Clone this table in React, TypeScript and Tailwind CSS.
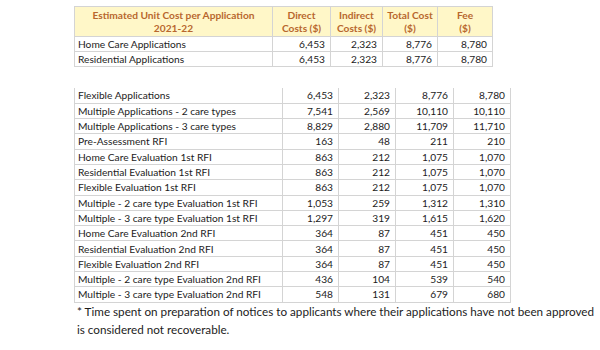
import React from "react";

const top = [
  ["Home Care Applications", "6,453", "2,323", "8,776", "8,780"],
  ["Residential Applications", "6,453", "2,323", "8,776", "8,780"],
];

const rows = [
  ["Flexible Applications", "6,453", "2,323", "8,776", "8,780"],
  ["Multiple Applications - 2 care types", "7,541", "2,569", "10,110", "10,110"],
  ["Multiple Applications - 3 care types", "8,829", "2,880", "11,709", "11,710"],
  ["Pre-Assessment RFI", "163", "48", "211", "210"],
  ["Home Care Evaluation 1st RFI", "863", "212", "1,075", "1,070"],
  ["Residential Evaluation 1st RFI", "863", "212", "1,075", "1,070"],
  ["Flexible Evaluation 1st RFI", "863", "212", "1,075", "1,070"],
  ["Multiple - 2 care type Evaluation 1st RFI", "1,053", "259", "1,312", "1,310"],
  ["Multiple - 3 care type Evaluation 1st RFI", "1,297", "319", "1,615", "1,620"],
  ["Home Care Evaluation 2nd RFI", "364", "87", "451", "450"],
  ["Residential Evaluation 2nd RFI", "364", "87", "451", "450"],
  ["Flexible Evaluation 2nd RFI", "364", "87", "451", "450"],
  ["Multiple - 2 care type Evaluation 2nd RFI", "436", "104", "539", "540"],
  ["Multiple - 3 care type Evaluation 2nd RFI", "548", "131", "679", "680"],
];

export default function App() {
  return (
    <div
      className="w-[600px] h-[350px] bg-white overflow-hidden pl-[74px] pt-[6px] text-[#1c1c1c]"
      style={{ fontFamily: "Lato, 'Open Sans', sans-serif" }}
    >
      <table className="border-collapse table-fixed text-[10.2px] leading-none">
        <colgroup>
          <col className="w-[198px]" />
          <col className="w-[58px]" />
          <col className="w-[52px]" />
          <col className="w-[55px]" />
          <col className="w-[55px]" />
        </colgroup>
        <thead>
          <tr className="h-[30px] bg-[#fff7c8] text-[#b8672e] font-bold">
            <th className="border border-[#d4d4d4] text-center leading-[13px]">
              Estimated Unit Cost per Application
              <br />
              2021-22
            </th>
            <th className="border border-[#d4d4d4] text-center leading-[13px]">
              Direct
              <br />
              Costs ($)
            </th>
            <th className="border border-[#d4d4d4] text-center leading-[13px]">
              Indirect
              <br />
              Costs ($)
            </th>
            <th className="border border-[#d4d4d4] text-center leading-[13px]">
              Total Cost
              <br />
              ($)
            </th>
            <th className="border border-[#d4d4d4] text-center leading-[13px]">
              Fee
              <br />
              ($)
            </th>
          </tr>
        </thead>
        <tbody>
          {top.map((r) => (
            <tr key={r[0]} className="h-[15px]">
              <td className="border border-[#d4d4d4] pl-[3px] text-left">{r[0]}</td>
              {r.slice(1).map((v, i) => (
                <td key={i} className="border border-[#d4d4d4] pr-[5px] text-right">
                  {v}
                </td>
              ))}
            </tr>
          ))}
        </tbody>
      </table>

      <table className="mt-[21px] border-collapse table-fixed text-[10.2px] leading-none">
        <colgroup>
          <col className="w-[208px]" />
          <col className="w-[56px]" />
          <col className="w-[57px]" />
          <col className="w-[58px]" />
          <col className="w-[57px]" />
        </colgroup>
        <tbody>
          {rows.map((r, idx) => (
            <tr key={r[0]} className="h-[15.3px]">
              <td
                className={`border-x border-b border-[#d4d4d4] pl-[3px] text-left ${
                  idx === 0 ? "border-t-0" : "border-t"
                }`}
              >
                {r[0]}
              </td>
              {r.slice(1).map((v, i) => (
                <td
                  key={i}
                  className={`border-x border-b border-[#d4d4d4] pr-[5px] text-right ${
                    idx === 0 ? "border-t-0" : "border-t"
                  }`}
                >
                  {v}
                </td>
              ))}
            </tr>
          ))}
        </tbody>
      </table>

      <p className="-ml-[71px] pl-[74px] text-[11.7px] leading-[18px] mt-[-1px] whitespace-nowrap">
        * Time spent on preparation of notices to applicants where their applications have not been approved
        <br />
        is considered not recoverable.
      </p>
    </div>
  );
}
